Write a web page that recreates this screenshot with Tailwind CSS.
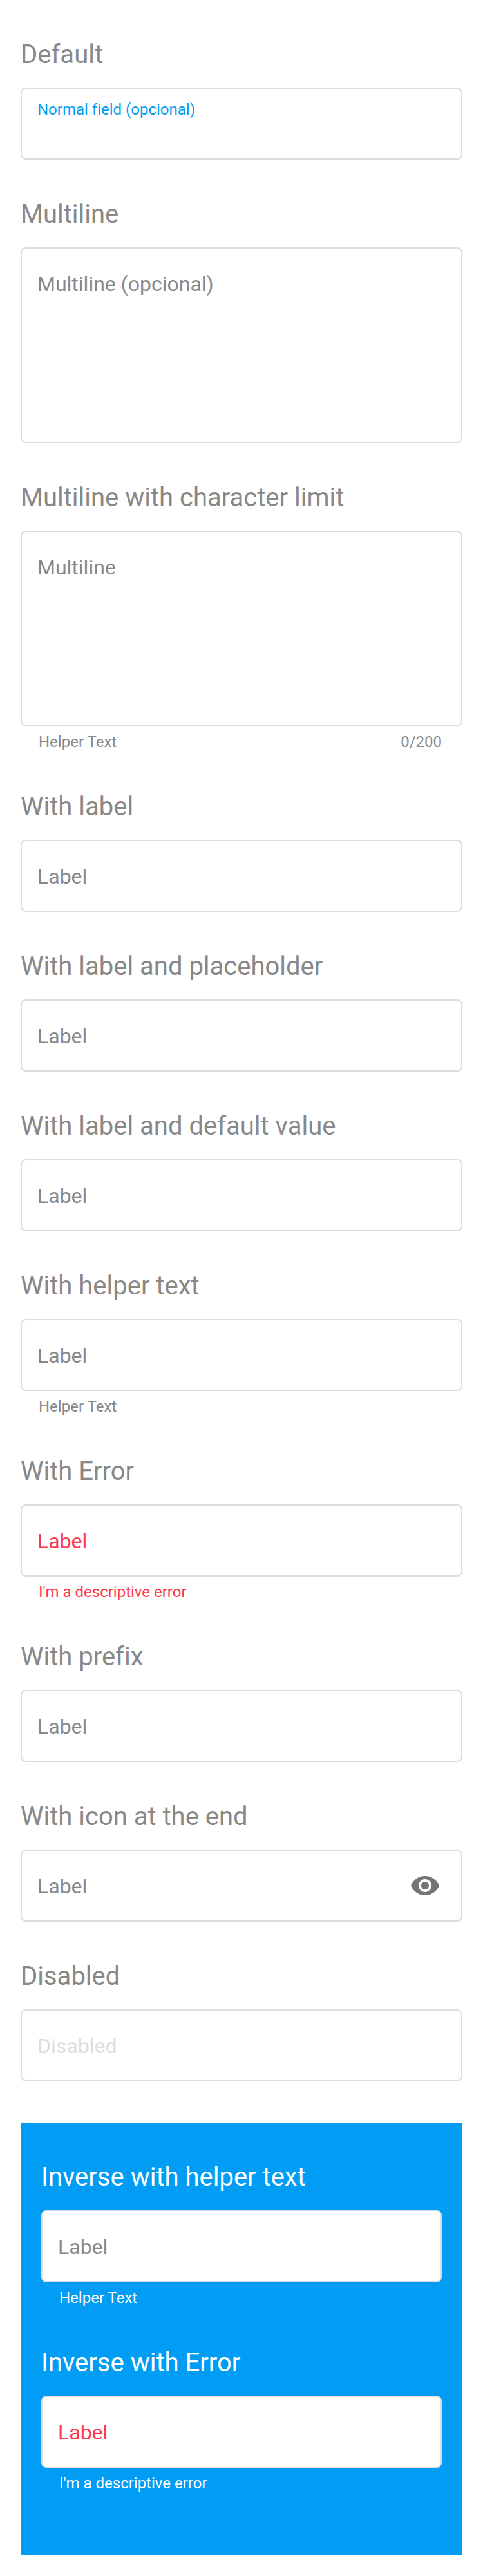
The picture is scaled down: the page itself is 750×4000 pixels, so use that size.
<!DOCTYPE html>
<html lang="en">
<head>
<meta charset="utf-8">
<title>Text fields</title>
<script src="https://cdn.jsdelivr.net/npm/@tailwindcss/browser@4"></script>
</head>
<body class="bg-white font-['Roboto',sans-serif] font-normal antialiased [font-variant-ligatures:none]">
<main class="flex h-[4000px] w-[750px] flex-col px-8 pt-[65px] text-[32px] leading-8 text-[#86888c]">
  <section class="mb-[65px]">
    <h2 class="mb-[31px] text-[40px] leading-10 text-[#888888]">Default</h2>
    <div class="h-28 w-[686px] rounded-lg border-2 border-[#dddddd] pt-[18px] pl-6 text-2xl leading-[28px] text-[#019df4]">Normal field (opcional)</div>
  </section>
  <section class="mb-[65px]">
    <h2 class="mb-[31px] text-[40px] leading-10 text-[#888888]">Multiline</h2>
    <div class="h-[304px] w-[686px] rounded-lg border-2 border-[#dddddd] pt-[39px] pl-6">Multiline (opcional)</div>
  </section>
  <section class="mb-[65px]">
    <h2 class="mb-[31px] text-[40px] leading-10 text-[#888888]">Multiline with character limit</h2>
    <div class="h-[304px] w-[686px] rounded-lg border-2 border-[#dddddd] pt-[39px] pl-6">Multiline</div>
    <div class="flex h-10 w-[686px] justify-between pt-[8px] pr-8 pl-7 text-2xl leading-8"><span>Helper Text</span><span>0/200</span></div>
  </section>
  <section class="mb-[65px]">
    <h2 class="mb-[31px] text-[40px] leading-10 text-[#888888]">With label</h2>
    <div class="h-28 w-[686px] rounded-lg border-2 border-[#dddddd] pt-[39px] pl-6">Label</div>
  </section>
  <section class="mb-[65px]">
    <h2 class="mb-[31px] text-[40px] leading-10 text-[#888888]">With label and placeholder</h2>
    <div class="h-28 w-[686px] rounded-lg border-2 border-[#dddddd] pt-[39px] pl-6">Label</div>
  </section>
  <section class="mb-[65px]">
    <h2 class="mb-[31px] text-[40px] leading-10 text-[#888888]">With label and default value</h2>
    <div class="h-28 w-[686px] rounded-lg border-2 border-[#dddddd] pt-[39px] pl-6">Label</div>
  </section>
  <section class="mb-[65px]">
    <h2 class="mb-[31px] text-[40px] leading-10 text-[#888888]">With helper text</h2>
    <div class="h-28 w-[686px] rounded-lg border-2 border-[#dddddd] pt-[39px] pl-6">Label</div>
    <div class="h-10 pt-[8px] pl-7 text-2xl leading-8">Helper Text</div>
  </section>
  <section class="mb-[65px]">
    <h2 class="mb-[31px] text-[40px] leading-10 text-[#888888]">With Error</h2>
    <div class="h-28 w-[686px] rounded-lg border-2 border-[#dddddd] pt-[39px] pl-6 text-[#ff374a]">Label</div>
    <div class="h-10 pt-[8px] pl-7 text-2xl leading-8 text-[#ff374a]">I'm a descriptive error</div>
  </section>
  <section class="mb-[65px]">
    <h2 class="mb-[31px] text-[40px] leading-10 text-[#888888]">With prefix</h2>
    <div class="h-28 w-[686px] rounded-lg border-2 border-[#dddddd] pt-[39px] pl-6">Label</div>
  </section>
  <section class="mb-[65px]">
    <h2 class="mb-[31px] text-[40px] leading-10 text-[#888888]">With icon at the end</h2>
    <div class="flex h-28 w-[686px] justify-between rounded-lg border-2 border-[#dddddd] pr-8 pl-6">
      <span class="pt-[39px]">Label</span>
      <svg class="size-12 self-center" viewBox="0 0 24 24" fill="#757575"><path d="M12 4.5C7 4.5 2.73 7.61 1 12c1.73 4.39 6 7.5 11 7.5s9.27-3.11 11-7.5c-1.73-4.39-6-7.5-11-7.5zM12 17c-2.76 0-5-2.24-5-5s2.24-5 5-5 5 2.24 5 5-2.24 5-5 5zm0-8c-1.66 0-3 1.34-3 3s1.34 3 3 3 3-1.34 3-3-1.34-3-3-3z"/></svg>
    </div>
  </section>
  <section class="mb-16">
    <h2 class="mb-[31px] text-[40px] leading-10 text-[#888888]">Disabled</h2>
    <div class="h-28 w-[686px] rounded-lg border-2 border-[#dddddd] pt-[39px] pl-6 text-[#dddddd]">Disabled</div>
  </section>
  <div class="h-[672px] w-[686px] bg-[#019df4] px-8 pt-[65px] text-white">
    <section class="mb-[65px]">
      <h2 class="mb-[31px] text-[40px] leading-10">Inverse with helper text</h2>
      <div class="h-28 rounded-lg border-2 border-[#dddddd] bg-white pt-[39px] pl-6 text-[#86888c]">Label</div>
      <div class="h-10 pt-[8px] pl-7 text-2xl leading-8">Helper Text</div>
    </section>
    <section>
      <h2 class="mb-[31px] text-[40px] leading-10">Inverse with Error</h2>
      <div class="h-28 rounded-lg border-2 border-[#dddddd] bg-white pt-[39px] pl-6 text-[#ff374a]">Label</div>
      <div class="h-10 pt-[8px] pl-7 text-2xl leading-8">I'm a descriptive error</div>
    </section>
  </div>
</main>
</body>
</html>
